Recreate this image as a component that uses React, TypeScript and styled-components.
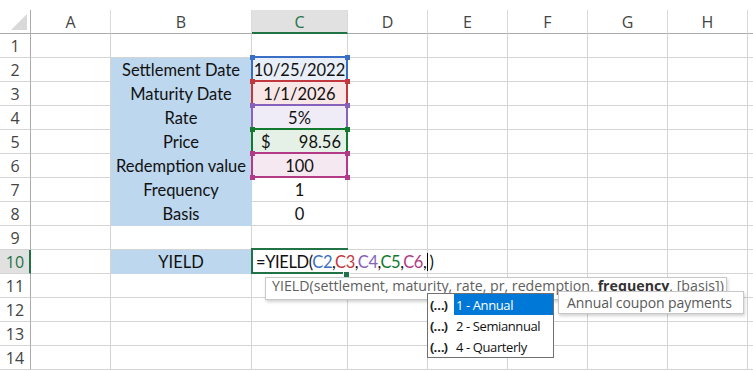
import styled, { createGlobalStyle } from "styled-components";

const GlobalStyle = createGlobalStyle`
  html, body {
    margin: 0;
    padding: 0;
    background: #fff;
    overflow: hidden;
  }
`;

const Sheet = styled.div`
  display: grid;
  grid-template-columns: 31px 80px 141px 96px repeat(5, 80px) 1fr;
  grid-auto-rows: 24px;
  margin-top: 10px;
  width: 753px;
`;

const Corner = styled.div`
  border-right: 1px solid #ababab;
  border-bottom: 1px solid #ababab;
  display: flex;
  align-items: flex-end;
  justify-content: flex-end;
  padding: 0 3px 3px 0;
`;

const CornerTriangle = styled.div`
  width: 16px;
  height: 16px;
  background: #d9d9d9;
  clip-path: polygon(100% 0, 100% 100%, 0 100%);
`;

const ColHead = styled.div<{ $active?: boolean }>`
  border-right: 1px solid #dadada;
  border-bottom: ${p => (p.$active ? "2px solid #217346" : "1px solid #ababab")};
  background: ${p => (p.$active ? "#e1e1e1" : "#fff")};
  color: ${p => (p.$active ? "#217346" : "#444")};
  font: 16px "Open Sans", sans-serif;
  display: flex;
  align-items: center;
  justify-content: center;
  padding-top: ${p => (p.$active ? "1px" : "0")};
`;

const RowHead = styled.div<{ $active?: boolean }>`
  border-right: ${p => (p.$active ? "2px solid #217346" : "1px solid #ababab")};
  border-bottom: 1px solid #d4d4d4;
  background: ${p => (p.$active ? "#e1e1e1" : "#fff")};
  color: ${p => (p.$active ? "#217346" : "#444")};
  font: 16px "Open Sans", sans-serif;
  display: flex;
  align-items: center;
  justify-content: center;
  padding-left: ${p => (p.$active ? "1px" : "0")};
`;

const Cell = styled.div<{ $fill?: string; $align?: string; $noRight?: boolean; $pos?: boolean }>`
  border-right: 1px solid ${p => (p.$noRight ? "#fff" : p.$fill ?? "#d4d4d4")};
  border-bottom: 1px solid ${p => p.$fill ?? "#d4d4d4"};
  background: ${p => p.$fill ?? "#fff"};
  font: 16.5px Lato, "Liberation Sans", sans-serif;
  color: #111;
  display: flex;
  align-items: center;
  justify-content: ${p => p.$align ?? "center"};
  padding: 1px 4px 0;
  white-space: nowrap;
  position: ${p => (p.$pos ? "relative" : "static")};
  z-index: ${p => (p.$pos ? 1 : "auto")};
`;

const RefFrame = styled.span<{ $c: string }>`
  position: absolute;
  top: -2px;
  left: -1px;
  right: -1px;
  bottom: -1px;
  border: 2px solid ${p => p.$c};
  pointer-events: none;
`;

const Handle = styled.span<{ $c: string; $x: "l" | "r"; $y: "t" | "b" }>`
  position: absolute;
  width: 5px;
  height: 5px;
  background: ${p => p.$c};
  ${p => (p.$x === "l" ? "left: -2px;" : "right: -3px;")}
  ${p => (p.$y === "t" ? "top: -3px;" : "bottom: -3px;")}
`;

const ActiveFrame = styled.span`
  position: absolute;
  top: -2px;
  left: -1px;
  right: -1px;
  bottom: -1px;
  border: 2px solid #217346;
  border-right: none;
`;

const FillHandle = styled.span`
  position: absolute;
  right: -2px;
  bottom: -4px;
  width: 5px;
  height: 5px;
  background: #217346;
  outline: 1px solid #fff;
`;

const Accounting = styled.span`
  display: flex;
  width: 100%;
  justify-content: space-between;
  padding: 0 2px 0 5px;
`;

const Formula = styled.span`
  color: #111;
  letter-spacing: -0.4px;
`;

const Ref = styled.span<{ $c: string }>`
  color: ${p => p.$c};
`;

const Caret = styled.span`
  display: inline-block;
  width: 1px;
  height: 18px;
  background: #000;
  vertical-align: -3px;
  margin: 0 1px;
`;

const ArgTip = styled.div`
  position: absolute;
  left: 13px;
  top: 27px;
  width: 462px;
  height: 23px;
  box-sizing: border-box;
  padding: 0 0 6px 6px;
  display: flex;
  align-items: center;
  background: #fff;
  border: 1px solid #c8c8c8;
  box-shadow: 1px 2px 3px rgba(0, 0, 0, 0.18);
  font: 14.2px "Open Sans", sans-serif;
  color: #606060;
  b {
    font-weight: 700;
    color: #333;
    margin-left: 4px;
  }
`;

const ListBox = styled.div`
  position: absolute;
  left: 175px;
  top: 43px;
  width: 127px;
  box-sizing: border-box;
  background: #fff;
  border: 1px solid #707070;
  display: flex;
  flex-direction: column;
  z-index: 2;
`;

const ListItem = styled.div`
  height: 21px;
  display: flex;
  align-items: stretch;
  font: 13px "Open Sans", sans-serif;
  color: #111;
`;

const ItemIcon = styled.span`
  width: 24px;
  flex: none;
  padding-left: 2px;
  display: flex;
  align-items: center;
  font-weight: 700;
  letter-spacing: -1px;
  color: #222;
`;

const ItemLabel = styled.span<{ $selected?: boolean }>`
  flex: 1;
  display: flex;
  align-items: center;
  padding-left: 2px;
  letter-spacing: -0.4px;
  background: ${p => (p.$selected ? "#0078d7" : "transparent")};
  color: ${p => (p.$selected ? "#fff" : "#111")};
`;

const DescTip = styled.div`
  position: absolute;
  left: 306px;
  top: 41px;
  width: 186px;
  height: 23px;
  box-sizing: border-box;
  padding-left: 8px;
  display: flex;
  align-items: center;
  background: #fff;
  border: 1px solid #c8c8c8;
  box-shadow: 1px 2px 3px rgba(0, 0, 0, 0.18);
  font: 14px "Open Sans", sans-serif;
  color: #595959;
  letter-spacing: -0.1px;
  z-index: 3;
`;

const COLS = ["A", "B", "C", "D", "E", "F", "G", "H", ""];
const BFILL = "#bdd7ee";

const labels: Record<number, string> = {
  2: "Settlement Date",
  3: "Maturity Date",
  4: "Rate",
  5: "Price",
  6: "Redemption value",
  7: "Frequency",
  8: "Basis",
  10: "YIELD",
};

type RefCell = { text?: string; color: string; fill: string; money?: string };

const refs: Record<number, RefCell> = {
  2: { text: "10/25/2022", color: "#3b6fc6", fill: "#e9eff9" },
  3: { text: "1/1/2026", color: "#c1393f", fill: "#f9e7e8" },
  4: { text: "5%", color: "#8662bd", fill: "#f0ecf7" },
  5: { money: "98.56", color: "#117a2e", fill: "#e5f1e6" },
  6: { text: "100", color: "#b23a87", fill: "#f6e8f0" },
};

const plainC: Record<number, string> = { 7: "1", 8: "0" };

const options = [
  { value: "1 - Annual", selected: true },
  { value: "2 - Semiannual" },
  { value: "4 - Quarterly" },
];

function CCell({ row }: { row: number }) {
  const ref = refs[row];
  if (ref) {
    return (
      <Cell $fill={ref.fill} $pos>
        {ref.money ? (
          <Accounting>
            <span>$</span>
            <span>{ref.money}</span>
          </Accounting>
        ) : (
          ref.text
        )}
        <RefFrame $c={ref.color} />
        <Handle $c={ref.color} $x="l" $y="t" />
        <Handle $c={ref.color} $x="r" $y="t" />
        <Handle $c={ref.color} $x="l" $y="b" />
        <Handle $c={ref.color} $x="r" $y="b" />
      </Cell>
    );
  }
  if (row === 10) {
    return (
      <Cell $align="flex-start" $noRight $pos style={{ zIndex: 5 }}>
        <Formula>
          =YIELD(<Ref $c="#3b6fc6">C2</Ref>,<Ref $c="#c1393f">C3</Ref>,<Ref $c="#8662bd">C4</Ref>,
          <Ref $c="#117a2e">C5</Ref>,<Ref $c="#b23a87">C6</Ref>,<Caret />)
        </Formula>
        <ActiveFrame />
        <FillHandle />
        <ArgTip>
          YIELD(settlement, maturity, rate, pr, redemption,<b>frequency</b>, [basis])
        </ArgTip>
        <ListBox>
          {options.map(o => (
            <ListItem key={o.value}>
              <ItemIcon>(…)</ItemIcon>
              <ItemLabel $selected={o.selected}>{o.value}</ItemLabel>
            </ListItem>
          ))}
        </ListBox>
        <DescTip>Annual coupon payments</DescTip>
      </Cell>
    );
  }
  return <Cell>{plainC[row]}</Cell>;
}

function RowCells({ row }: { row: number }) {
  const label = labels[row];
  return (
    <>
      <RowHead $active={row === 10}>{row}</RowHead>
      <Cell />
      <Cell $fill={label ? BFILL : undefined}>{label}</Cell>
      <CCell row={row} />
      <Cell />
      <Cell />
      <Cell />
      <Cell />
      <Cell />
      <Cell />
    </>
  );
}

export default function App() {
  const rows = Array.from({ length: 14 }, (_, i) => i + 1);
  return (
    <>
      <GlobalStyle />
      <Sheet>
        <Corner>
          <CornerTriangle />
        </Corner>
        {COLS.map(c => (
          <ColHead key={c || "x"} $active={c === "C"}>
            {c}
          </ColHead>
        ))}
        {rows.map(r => (
          <RowCells key={r} row={r} />
        ))}
      </Sheet>
    </>
  );
}
